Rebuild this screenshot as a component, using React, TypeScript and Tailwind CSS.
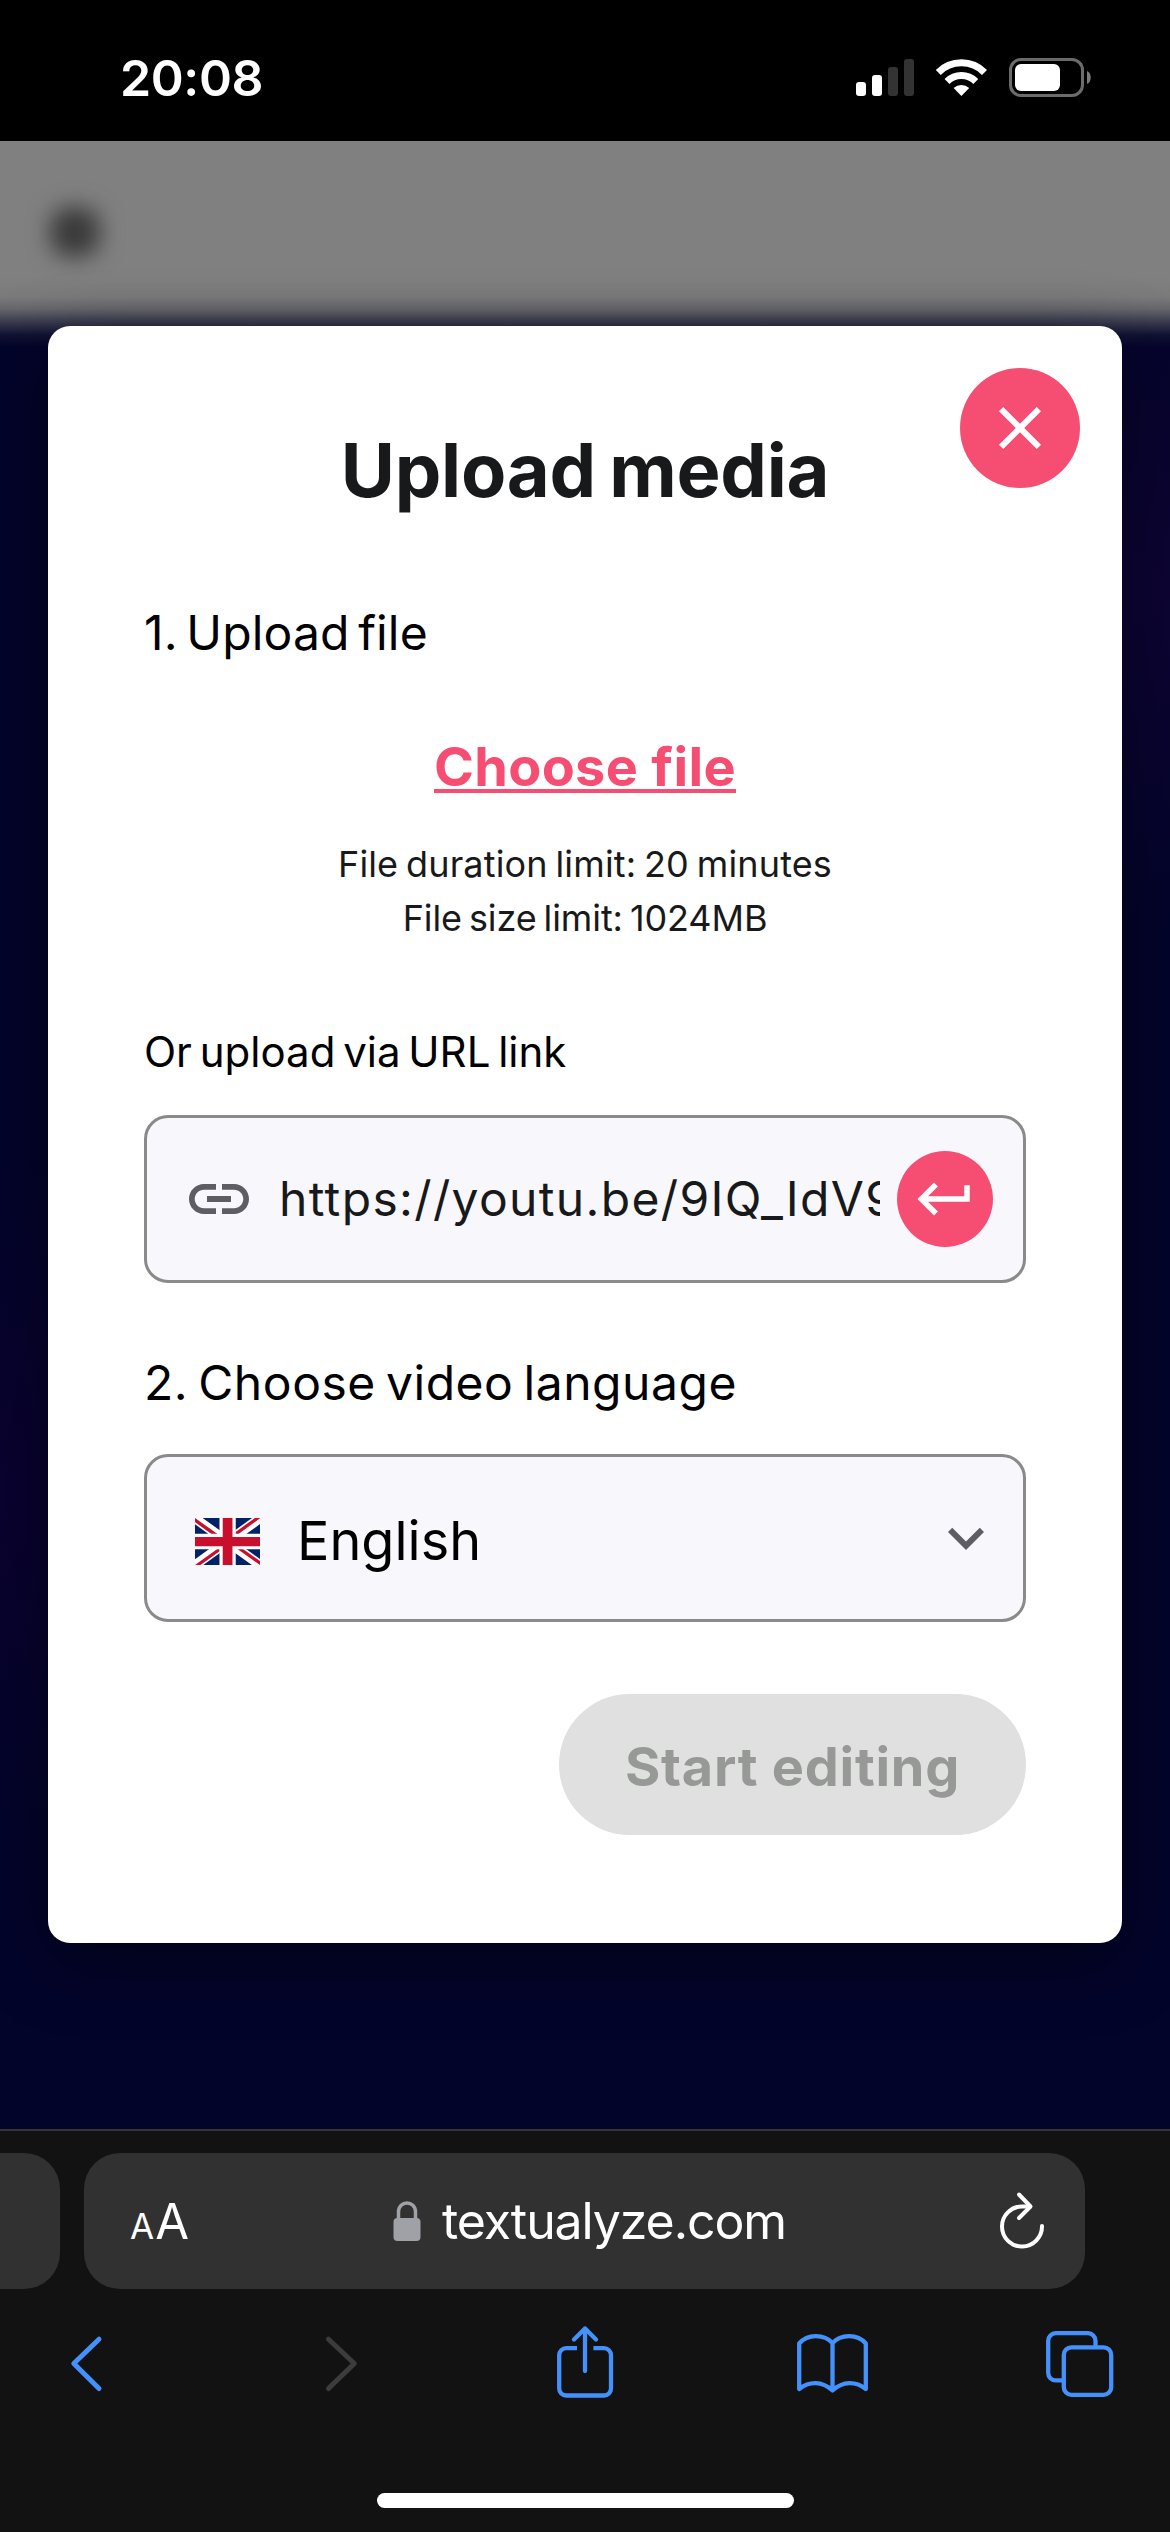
function Icon({ d, className, fill }: { d: string; className: string; fill: string }) {
  return (
    <svg viewBox="0 0 24 24" className={className} fill={fill}>
      <path d={d} />
    </svg>
  );
}

function StatusBar() {
  return (
    <header className="flex h-[141px] shrink-0 items-start justify-between bg-black pt-[48px] pr-[77px] pl-[120px] text-white">
      <span className="h-[60px] text-[50px] leading-[60px] font-semibold tracking-[-0.4px]">20:08</span>
      <div className="flex pt-[9px]">
        <svg className="h-[42px] w-[238px]" viewBox="855 57 238 42">
          <rect x="856" y="82" width="10" height="14" rx="3" fill="#fff" />
          <rect x="872" y="75" width="10" height="21" rx="3" fill="#fff" />
          <rect x="888" y="67" width="10" height="29" rx="3" fill="#333" />
          <rect x="904" y="59" width="10" height="37" rx="3" fill="#333" />
          <g fill="none" stroke="#fff">
            <path d="M938.3 72.5a32.5 32.5 0 0 1 46.2 0" strokeWidth="7" />
            <path d="M947 81.5a20.5 20.5 0 0 1 28.8 0" strokeWidth="7" />
          </g>
          <path d="M961.4 96l-7.8-8a11.5 11.5 0 0 1 15.6 0z" fill="#fff" />
          <rect x="1010.5" y="59.5" width="72" height="36" rx="10.5" fill="none" stroke="#6b6b6b" strokeWidth="3" />
          <rect x="1015" y="64" width="45" height="27" rx="6" fill="#fff" />
          <path d="M1087 71c5 2 5 11 0 13z" fill="#7a7a7a" />
        </svg>
      </div>
    </header>
  );
}

function UnionJack() {
  return (
    <svg viewBox="0 0 640 480" preserveAspectRatio="none" className="h-[47px] w-[65px]">
      <path fill="#012169" d="M0 0h640v480H0z" />
      <path fill="#FFF" d="m75 0 244 181L562 0h78v62L400 241l240 178v61h-80L320 301 81 480H0v-60l239-178L0 64V0z" />
      <path fill="#C8102E" d="m424 281 216 159v40L369 281zm-184 20 6 35L54 480H0zM640 0v3L391 191l2-44L590 0zM0 0l239 176h-60L0 42z" />
      <path fill="#FFF" d="M241 0v480h160V0zM0 160v160h640V160z" />
      <path fill="#C8102E" d="M0 193v96h640v-96zM273 0v480h96V0z" />
    </svg>
  );
}

function UploadDialog() {
  return (
    <section className="relative mx-[48px] flex h-[1617px] flex-col rounded-[22px] bg-white px-[96px] shadow-[0_20px_70px_rgba(0,0,0,0.4)]">
      <button className="absolute top-[42px] right-[42px] flex size-[120px] items-center justify-center rounded-full bg-[#f64e72]">
        <Icon className="size-[72px]" fill="#fff" d="M19 6.41 17.59 5 12 10.59 6.41 5 5 6.41 10.59 12 5 17.59 6.41 19 12 13.41 17.59 19 19 17.59 13.41 12z" />
      </button>
      <h1 className="mt-[99px] text-center text-[74px] leading-[90px] font-bold tracking-[-0.25px] text-[#18191a] [word-spacing:-4px]">Upload media</h1>
      <p className="mt-[88px] text-[48px] leading-[60px] tracking-[0.15px] text-black [word-spacing:-5px]">1. Upload file</p>
      <p className="mt-[72px] text-center text-[54px] leading-[64px] font-bold tracking-[0.33px] text-[#f64e72]">
        <span className="underline decoration-[4px] underline-offset-[3px]">Choose file</span>
      </p>
      <div className="mt-[38px] text-center text-[36px] leading-[54px] text-[#18191a]">
        <p className="tracking-[0.15px] [word-spacing:-2.5px]">File duration limit: 20 minutes</p>
        <p className="tracking-[-0.1px] [word-spacing:-3px]">File size limit: 1024MB</p>
      </div>
      <p className="mt-[82px] text-[42px] leading-[50px] text-black [word-spacing:-4px]">Or upload via URL link</p>
      <div className="mt-[38px] flex h-[168px] shrink-0 items-center rounded-[24px] border-[3px] border-[#8a8a8a] bg-[#f8f7fc] pr-[30px] pl-[36px]">
        <Icon
          className="size-[72px] shrink-0"
          fill="#5f5d64"
          d="M3.9 12c0-1.71 1.39-3.1 3.1-3.1h4V7H7c-2.76 0-5 2.24-5 5s2.24 5 5 5h4v-1.9H7c-1.71 0-3.1-1.39-3.1-3.1M8 13h8v-2H8zm9-6h-4v1.9h4c1.71 0 3.1 1.39 3.1 3.1s-1.39 3.1-3.1 3.1h-4V17h4c2.76 0 5-2.24 5-5s-2.24-5-5-5"
        />
        <div className="ml-[24px] w-[601px] overflow-hidden text-[48px] leading-[70px] tracking-[1.35px] whitespace-nowrap text-[#18191a]">https://youtu.be/9IQ_IdV9</div>
        <button className="ml-auto flex size-[96px] shrink-0 items-center justify-center rounded-full bg-[#f64e72]">
          <Icon className="size-[66px]" fill="#fff" d="M19 7v4H5.83l3.58-3.59L8 6l-6 6 6 6 1.41-1.41L5.83 13H21V7z" />
        </button>
      </div>
      <p className="mt-[70px] text-[48px] leading-[60px] tracking-[0.55px] text-black [word-spacing:-4px]">2. Choose video language</p>
      <div className="mt-[41px] flex h-[168px] shrink-0 items-center rounded-[24px] border-[3px] border-[#8a8a8a] bg-[#f8f7fc] pr-[21px] pl-[48px]">
        <div className="pt-[7px]">
          <UnionJack />
        </div>
        <span className="ml-[37px] pt-[6px] text-[54px] leading-[66px] text-black">English</span>
        <Icon className="ml-auto size-[72px]" fill="#5f5d64" d="M16.59 8.59 12 13.17 7.41 8.59 6 10l6 6 6-6z" />
      </div>
      <button className="mt-[72px] flex h-[141px] w-[467px] shrink-0 items-center justify-center self-end rounded-full bg-[#e0e0e0] pt-[5px] text-[54px] leading-[64px] font-bold tracking-[0.75px] text-[#979997]">
        Start editing
      </button>
    </section>
  );
}

function SafariBar() {
  return (
    <footer className="flex h-[403px] shrink-0 flex-col border-t-2 border-[#333338] bg-[#121212]">
      <div className="mt-[22px] flex h-[136px] shrink-0 gap-[24px]">
        <div className="w-[60px] rounded-r-[36px] bg-[#313131]" />
        <div className="flex w-[1001px] items-center rounded-[36px] bg-[#313131] pr-[39px] pl-[46px] text-white">
          <div className="flex w-[61px] items-baseline gap-[2px] pt-[5px] leading-[60px]">
            <span className="text-[35px] tracking-[-1px]">A</span>
            <span className="text-[49px] tracking-[-1px]">A</span>
          </div>
          <svg viewBox="0 0 28 40" className="ml-[202px] h-[40px] w-[28px]">
            <rect x="0.5" y="17" width="27" height="23" rx="4" fill="#a0a0a7" />
            <path d="M5.5 18V11C5.5 -1 22.5 -1 22.5 11V18" fill="none" stroke="#a0a0a7" strokeWidth="3.5" />
          </svg>
          <span className="ml-[21px] text-[50px] leading-[60px] tracking-[-1.1px]">textualyze.com</span>
          <svg viewBox="0 0 48 60" className="ml-auto h-[60px] w-[48px]" fill="none" stroke="#fff" strokeWidth="4" strokeLinecap="round" strokeLinejoin="round">
            <path d="M32 15.5H24A20 20 0 1 0 44 35" />
            <path d="M21 3.5 32.5 15.5 21 27" />
          </svg>
        </div>
      </div>
      <nav className="mt-[32px] flex h-[90px] shrink-0 text-[#4591fc]">
        <svg viewBox="0 0 39 90" className="ml-[67px] h-[90px] w-[39px]" fill="none" stroke="currentColor" strokeWidth="5" strokeLinecap="round" strokeLinejoin="round">
          <path d="M32 18.2 6.8 42.5 32 67.5" />
        </svg>
        <svg viewBox="0 0 39 90" className="ml-[216px] h-[90px] w-[39px] text-[#3c3c3c]" fill="none" stroke="currentColor" strokeWidth="5" strokeLinecap="round" strokeLinejoin="round">
          <path d="M6.5 18.2 32.3 42.5 6.5 67.5" />
        </svg>
        <svg viewBox="0 0 64 90" className="ml-[192px] h-[90px] w-[64px]" fill="none" stroke="currentColor" strokeWidth="4.3" strokeLinejoin="round">
          <path d="M24 27.2H13.2a7 7 0 0 0-7 7V67.5a7 7 0 0 0 7 7H51a7 7 0 0 0 7-7V34.2a7 7 0 0 0-7-7H40.4" />
          <path d="M32 50V7.5M21 18.5 32 7.5 43 18.5" strokeLinecap="round" />
        </svg>
        <svg viewBox="0 0 80 90" className="ml-[176px] h-[90px] w-[80px]" fill="none" stroke="currentColor" strokeWidth="4.3" strokeLinecap="round" strokeLinejoin="round">
          <path d="M6.2 22.5C14.5 12.8 31 12.8 39.5 22C48 12.8 64.5 12.8 72.8 22.5V68C62.5 60 50 60 39.5 69.5C29 60 16.5 60 6.2 68ZM39.5 22V69" />
        </svg>
        <svg viewBox="0 0 76 90" className="ml-[169px] h-[90px] w-[76px]" fill="none" stroke="currentColor" strokeWidth="4.3">
          <rect x="21.8" y="26.4" width="47.4" height="47.4" rx="7.5" />
          <path d="M21.8 59.4H13.7a7.5 7.5 0 0 1-7.5-7.5V19.7a7.5 7.5 0 0 1 7.5-7.5H46a7.5 7.5 0 0 1 7.5 7.5V26" />
        </svg>
      </nav>
      <div className="mx-auto mt-[82px] h-[15px] w-[417px] rounded-full bg-white" />
    </footer>
  );
}

export default function App() {
  return (
    <main className="flex h-[2532px] w-[1170px] flex-col overflow-hidden bg-[#03042a] font-['Inter',sans-serif]">
      <StatusBar />
      <div className="relative h-[1988px] shrink-0 overflow-hidden bg-[radial-gradient(ellipse_300px_340px_at_0px_1350px,#0a0230_0%,#0a023000_100%),radial-gradient(ellipse_300px_340px_at_1170px_450px,#0d0433_0%,#0d043300_100%)] pt-[185px]">
        <div className="absolute inset-x-0 top-0 h-[206px] bg-[linear-gradient(to_bottom,#808080_0px,#808080_136px,#7a7a7b_156px,#66676b_168px,#3d3e50_180px,#111233_194px,#03042a00_206px)]" />
        <div className="absolute top-[66px] left-[50px] h-[50px] w-[50px] rounded-[20px] bg-[#3a3a3a] blur-[11px]" />
        <UploadDialog />
      </div>
      <SafariBar />
    </main>
  );
}
